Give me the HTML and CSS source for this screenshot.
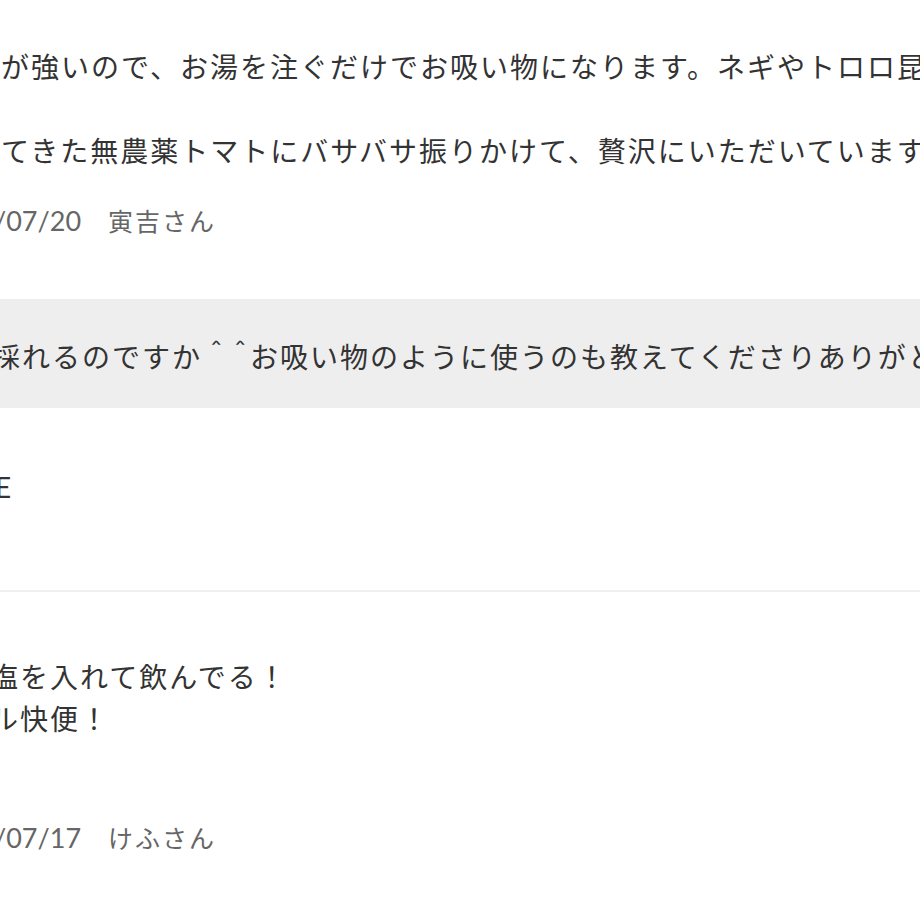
FILE: index.html
```html
<!DOCTYPE html>
<html lang="ja">
<head>
<meta charset="utf-8">
<link rel="stylesheet" href="styles.css">
</head>
<body>
<div class="page">
  <section class="review">
    <p class="review-text">が強いので、お湯を注ぐだけでお吸い物になります。ネギやトロロ昆布<br><br>てきた無農薬トマトにバサバサ振りかけて、贅沢にいただいています。</p>
    <div class="meta"><span class="date">/07/20</span><span class="name">寅吉さん</span></div>
    <div class="reply">
      <p class="reply-text">採れるのですか<span class="caret">＾＾</span>お吸い物のように使うのも教えてくださりありがとうございます</p>
    </div>
    <p class="shop">E</p>
  </section>
  <hr class="divider">
  <section class="review review-2">
    <p class="review-text text-2">塩を入れて飲んでる！<br>ル快便！</p>
    <div class="meta meta-2"><span class="date">/07/17</span><span class="name">けふさん</span></div>
  </section>
</div>
</body>
</html>
```
FILE: styles.css
```css
html, body {
  margin: 0;
  padding: 0;
  background: #ffffff;
  overflow: hidden;
}
.page {
  margin-left: -10px;
  width: 1400px;
  font-family: Lato, "Noto Sans CJK JP", sans-serif;
  color: #333333;
}
.review {
  display: flex;
  flex-direction: column;
}
.review-text {
  margin: 46px 0 0;
  padding-left: 11px;
  font-size: 28px;
  line-height: 42px;
  letter-spacing: 2px;
  white-space: nowrap;
}
.meta {
  display: flex;
  align-items: center;
  margin-top: 30px;
  padding-left: 4px;
  height: 36px;
  color: #666666;
}
.date {
  font-size: 27px;
  letter-spacing: 0;
}
.name {
  margin-left: 27px;
  font-size: 25px;
  letter-spacing: 2px;
}
.reply {
  margin-top: 61px;
  background: #eeeeee;
  padding: 37px 0 30px 2px;
}
.reply-text {
  margin: 0;
  font-size: 28px;
  line-height: 42px;
  letter-spacing: 2px;
  white-space: nowrap;
}
.caret {
  letter-spacing: -4px;
}
.shop {
  margin: 58px 0 0;
  padding-left: 5px;
  font-size: 28px;
  line-height: 42px;
  letter-spacing: 2px;
}
.divider {
  margin: 82px 0 0;
  border: 0;
  height: 2px;
  background: #efefef;
}
.text-2 {
  margin-top: 64px;
  padding-left: 0;
}
.meta-2 {
  margin-top: 79px;
}
```
